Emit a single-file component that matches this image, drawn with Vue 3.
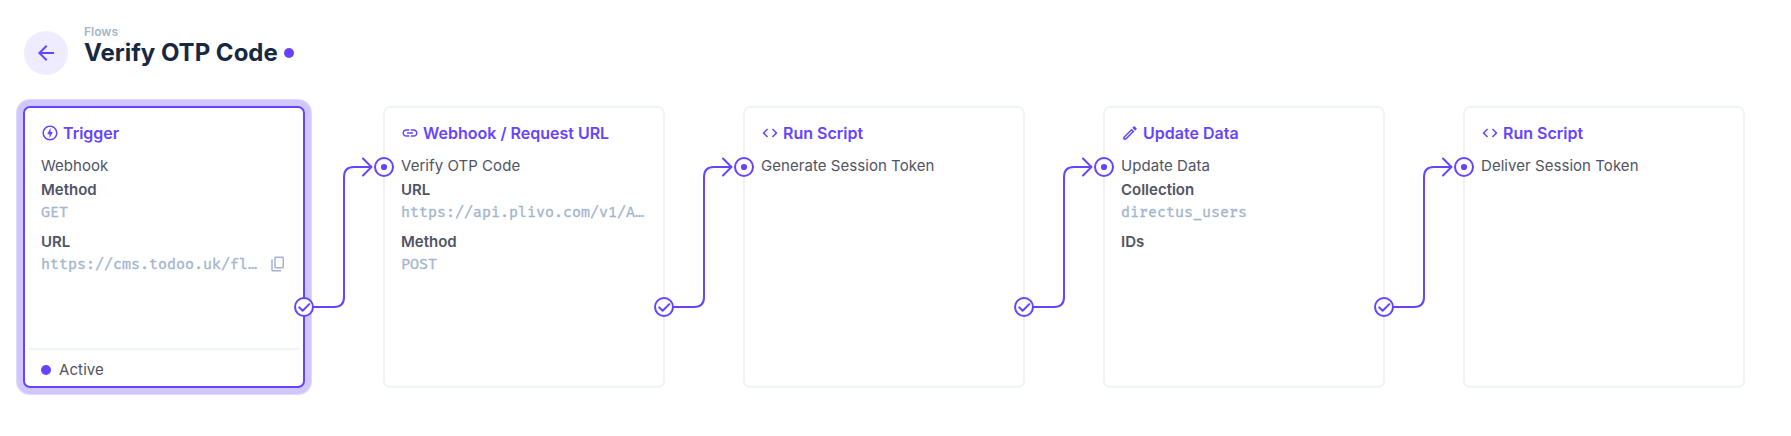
<script setup>
const panels = [
  {
    icon: 'bolt', title: 'Trigger', name: 'Webhook', active: true,
    fields: [
      { label: 'Method', value: 'GET' },
      { label: 'URL', value: 'https://cms.todoo.uk/fl…', copy: true },
    ],
  },
  {
    icon: 'link', title: 'Webhook / Request URL', name: 'Verify OTP Code',
    fields: [
      { label: 'URL', value: 'https://api.plivo.com/v1/A…' },
      { label: 'Method', value: 'POST' },
    ],
  },
  { icon: 'code', title: 'Run Script', name: 'Generate Session Token', fields: [] },
  {
    icon: 'edit', title: 'Update Data', name: 'Update Data',
    fields: [
      { label: 'Collection', value: 'directus_users' },
      { label: 'IDs', value: '' },
    ],
  },
  { icon: 'code', title: 'Run Script', name: 'Deliver Session Token', fields: [] },
]

const icons = {
  bolt: 'M12 2.02c-5.51 0-9.98 4.47-9.98 9.98s4.47 9.98 9.98 9.98 9.98-4.47 9.98-9.98S17.51 2.02 12 2.02zm0 17.96c-4.4 0-7.98-3.58-7.98-7.98S7.6 4.02 12 4.02 19.98 7.6 19.98 12 16.4 19.98 12 19.98zM12.75 5l-4.5 8.5h3.14V19l4.36-8.5h-3z',
  link: 'M3.9 12c0-1.71 1.39-3.1 3.1-3.1h4V7H7c-2.76 0-5 2.24-5 5s2.24 5 5 5h4v-1.9H7c-1.71 0-3.1-1.39-3.1-3.1zM8 13h8v-2H8v2zm9-6h-4v1.9h4c1.71 0 3.1 1.39 3.1 3.1s-1.39 3.1-3.1 3.1h-4V17h4c2.76 0 5-2.24 5-5s-2.24-5-5-5z',
  code: 'M9.4 16.6L4.8 12l4.6-4.6L8 6l-6 6 6 6 1.4-1.4zm5.2 0l4.6-4.6-4.6-4.6L16 6l6 6-6 6-1.4-1.4z',
  edit: 'M17.66 3c-.25 0-.51.1-.7.29l-1.83 1.83 3.75 3.75 1.83-1.83c.39-.39.39-1.02 0-1.41l-2.34-2.34c-.2-.2-.45-.29-.71-.29zm-3.6 3.19L3 17.25V21h3.75L17.81 9.94l-3.75-3.75zM5.92 19H5v-.92l9.06-9.06.92.92L5.92 19z',
  copy: 'M18 2H9c-1.1 0-2 .9-2 2v12c0 1.1.9 2 2 2h9c1.1 0 2-.9 2-2V4c0-1.1-.9-2-2-2zm0 14H9V4h9v12zM3 6h2v14h11v2H5c-1.1 0-2-.9-2-2V6z',
}
</script>

<template>
  <main class="page">
    <header class="header">
      <button class="back" aria-label="Back">
        <svg viewBox="0 0 24 24" width="24" height="24"><path d="M20 11H7.83l5.59-5.59L12 4l-8 8 8 8 1.41-1.41L7.83 13H20v-2z" /></svg>
      </button>
      <div class="headline">
        <div class="crumb">Flows</div>
        <h1 class="title">Verify OTP Code<span class="dot"></span></h1>
      </div>
    </header>

    <section class="flow">
      <article v-for="(p, i) in panels" :key="i" class="panel" :class="{ selected: p.active }">
        <div class="panel-head">
          <svg class="icon" viewBox="0 0 24 24" width="18" height="18"><path :d="icons[p.icon]" /></svg>
          <span>{{ p.title }}</span>
        </div>
        <div class="name">{{ p.name }}</div>
        <dl v-for="f in p.fields" :key="f.label" class="field">
          <dt>{{ f.label }}</dt>
          <dd>
            <span>{{ f.value }}</span>
            <svg v-if="f.copy" class="copy" viewBox="0 0 24 24" width="18" height="18"><path :d="icons.copy" /></svg>
          </dd>
        </dl>
        <footer v-if="p.active" class="status"><span class="dot"></span>Active</footer>

        <svg v-if="i < panels.length - 1" class="connector" width="112" height="170" viewBox="0 0 112 170">
          <path d="M21 151H41Q51 151 51 141V21Q51 11 61 11H78" />
          <path d="M70 2.5L78.5 11L70 19.5" />
          <circle class="port" cx="11" cy="151" r="9" />
          <path d="M6.2 151.4L9.6 154.8L16.3 148.1" />
          <circle class="port" cx="91" cy="11" r="9" />
          <circle class="core" cx="91" cy="11" r="3.1" />
        </svg>
      </article>
    </section>
  </main>
</template>

<style>
body { background: #fff; }
</style>

<style scoped>
.page {
  box-sizing: border-box;
  width: 1791px;
  height: 436px;
  padding: 23px 23px 0;
  overflow: hidden;
  font-family: Inter, "Liberation Sans", sans-serif;
  color: #4f5464;
}
.header { display: flex; height: 83px; }
.back {
  display: flex;
  align-items: center;
  justify-content: center;
  width: 44px;
  height: 44px;
  margin: 8px 16px 0 1px;
  padding: 0;
  border: 0;
  border-radius: 50%;
  background: #f0ecff;
}
.back svg { fill: #6644ff; }
.crumb { color: #a2b5cd; font-size: 12px; font-weight: 600; line-height: 18px; }
.title {
  display: flex;
  align-items: center;
  margin: -3px 0 0;
  color: #172940;
  font-size: 24px;
  font-weight: 700;
  line-height: 30px;
}
.dot { flex: none; width: 10px; height: 10px; border-radius: 50%; background: #6644ff; }
.title .dot { margin-left: 6px; }
.flow { display: flex; gap: 78px; }
.panel {
  position: relative;
  display: flex;
  flex: none;
  flex-direction: column;
  box-sizing: border-box;
  width: 282px;
  height: 282px;
  padding: 15px 16px 0;
  border: 2px solid #f0f4f9;
  border-radius: 7px;
  background: #fff;
  font-size: 15px;
}
.selected { border-color: #6644ff; box-shadow: 0 0 0 6px #d1c7ff, 0 0 0 7px #e0d9ff; }
.panel-head {
  display: flex;
  align-items: center;
  height: 20px;
  color: #6644ff;
  font-size: 16px;
  font-weight: 600;
  white-space: nowrap;
}
.icon { margin-right: 4px; fill: currentColor; }
.name { margin-top: 11px; line-height: 24px; letter-spacing: 0.05px; }
.field { margin: 0 0 8px; line-height: 24px; }
dt { font-weight: 600; height: 24px; }
dd {
  display: flex;
  align-items: center;
  justify-content: space-between;
  height: 20px;
  margin: 0;
  color: #a2b5cd;
  font-family: "Fira Mono", "DejaVu Sans Mono", monospace;
  font-size: 15px;
  line-height: 20px;
  white-space: nowrap;
  -webkit-text-stroke: 0.35px currentColor;
}
.copy { fill: #a2b5cd; }
.status {
  display: flex;
  align-items: center;
  gap: 8px;
  height: 32px;
  margin: auto -12px 0;
  padding: 4px 12px 0;
  border-top: 2px solid #f0f4f9;
  line-height: 20px;
  letter-spacing: 0.1px;
}
.connector {
  position: absolute;
  top: 48px;
  left: 268px;
  z-index: 1;
  fill: none;
  stroke: #6644ff;
  stroke-width: 2;
  stroke-linecap: round;
  stroke-linejoin: round;
}
.port { fill: #fff; }
.core { fill: #6644ff; stroke: none; }
</style>
